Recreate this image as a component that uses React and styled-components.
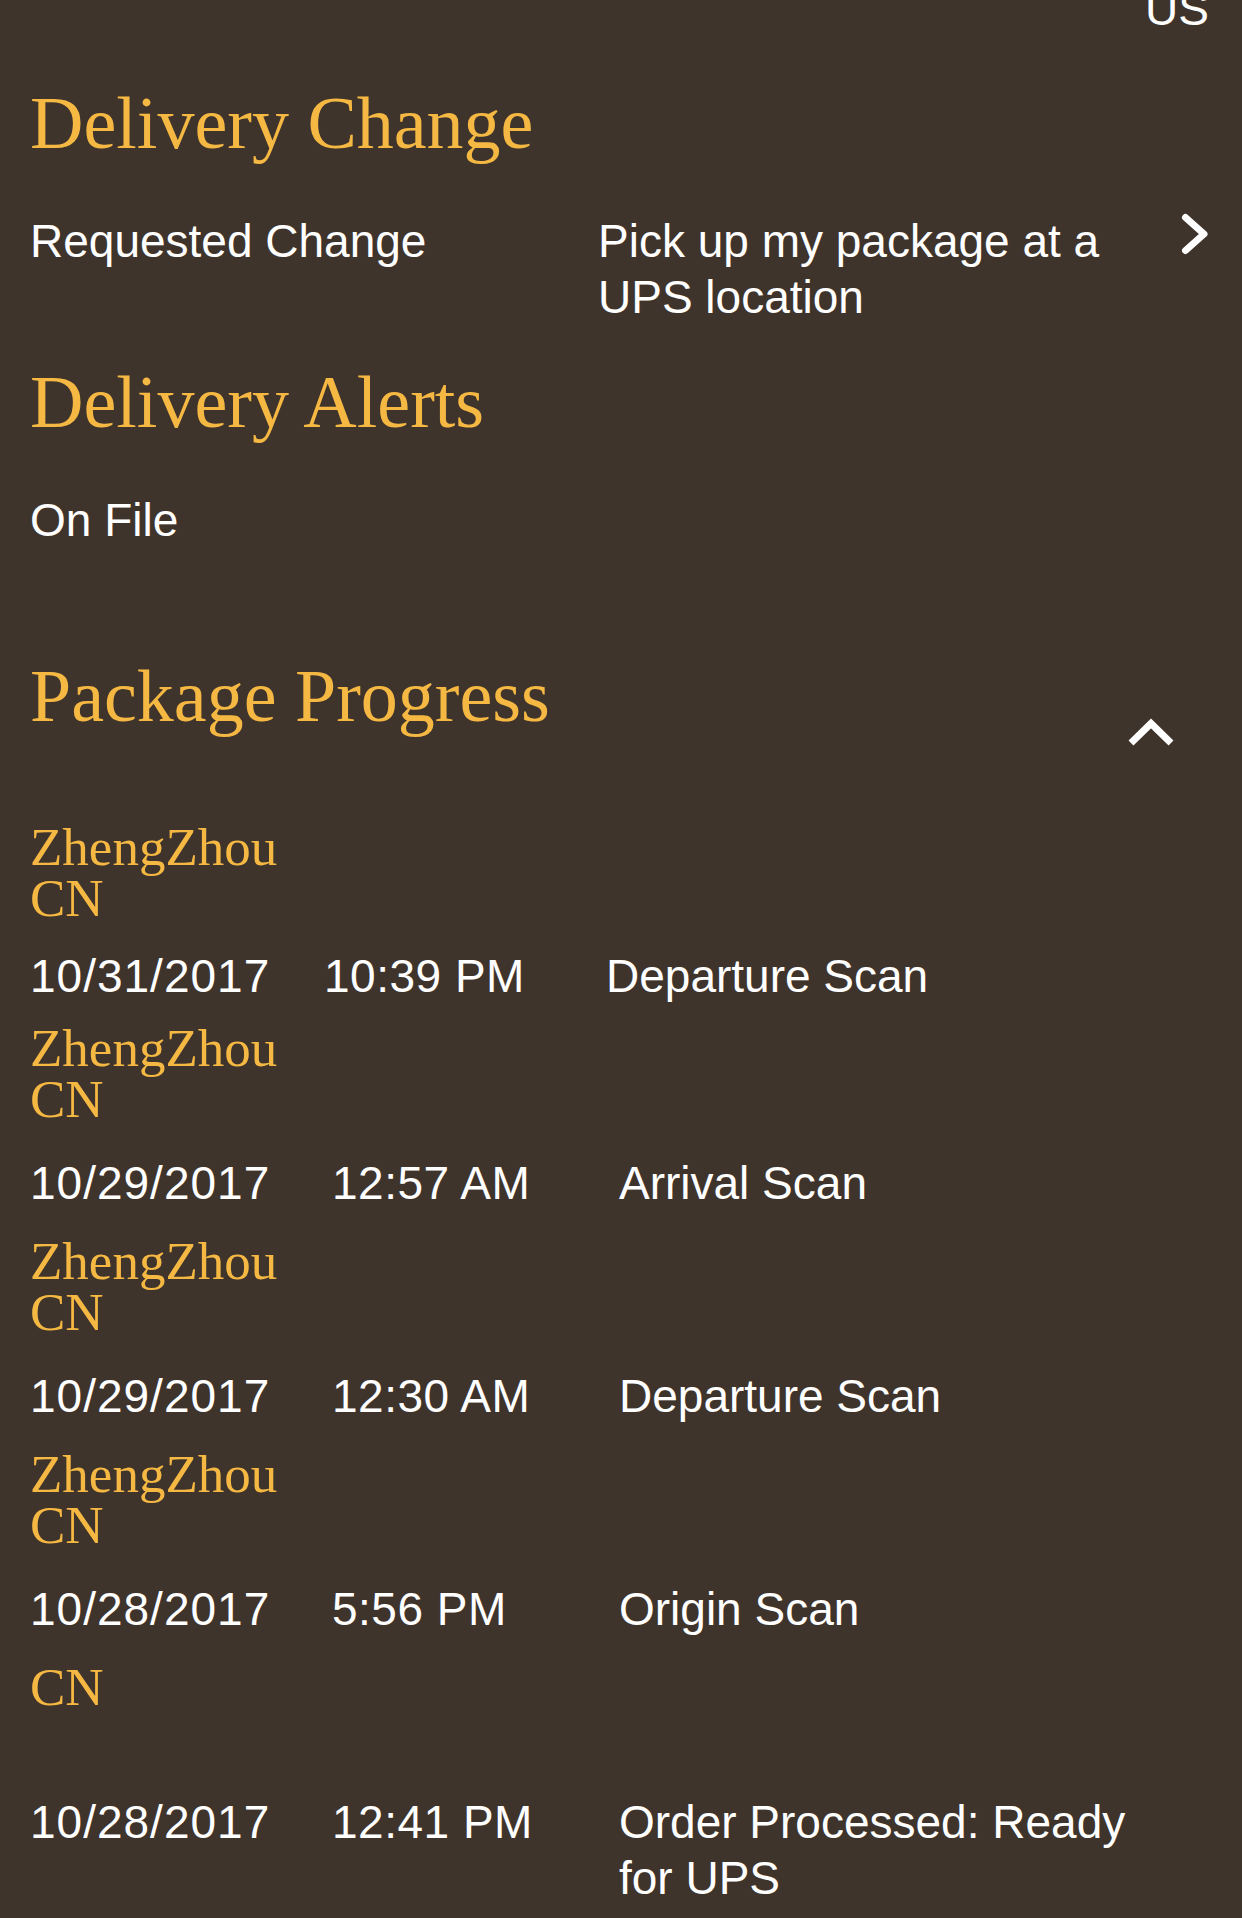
import React from "react";
import styled, { createGlobalStyle } from "styled-components";

const GlobalStyle = createGlobalStyle`
  html, body {
    margin: 0;
    padding: 0;
    background: #3f342c;
  }
  body {
    font-family: "Liberation Sans", Arial, sans-serif;
    color: #ffffff;
  }
`;

const Page = styled.main`
  box-sizing: border-box;
  width: 1242px;
  min-height: 1918px;
  padding: 0 33px 0 30px;
  background: #3f342c;
  overflow: hidden;
`;

const TopLine = styled.div`
  margin-top: -19px;
  text-align: right;
  font-size: 46px;
  line-height: 56px;
`;

const SectionTitle = styled.h2`
  margin: ${(p) => p.$mt}px 0 0;
  font-family: "Liberation Serif", "Times New Roman", serif;
  font-weight: 400;
  font-size: 74px;
  line-height: 80px;
  color: #f5b843;
  white-space: nowrap;
`;

const DetailRow = styled.div`
  display: grid;
  grid-template-columns: 568px 1fr 28px;
  margin-top: 50px;
  font-size: 46px;
  line-height: 56px;
`;

const DetailLabel = styled.div``;
const DetailValue = styled.div``;

const ChevronButton = styled.button`
  align-self: start;
  width: 28px;
  height: 42px;
  padding: 0;
  border: 0;
  background: none;
  display: block;
  svg {
    display: block;
  }
`;

const PlainText = styled.p`
  margin: ${(p) => p.$mt}px 0 0;
  font-size: 46px;
  line-height: 56px;
`;

const ProgressHeader = styled.div`
  display: flex;
  justify-content: space-between;
  align-items: flex-start;
  margin-top: 108px;
`;

const ToggleButton = styled.button`
  margin: 62px 35px 0 0;
  width: 46px;
  height: 28px;
  padding: 0;
  border: 0;
  background: none;
  svg {
    display: block;
  }
`;

const EventList = styled.section`
  margin-top: 76px;
  display: flex;
  flex-direction: column;
`;

const Event = styled.article`
  margin-top: ${(p) => p.$space}px;
`;

const Location = styled.div`
  min-height: 102px;
  font-family: "Liberation Serif", "Times New Roman", serif;
  font-size: 53px;
  line-height: 51px;
  color: #f5b843;
`;

const ScanRow = styled.div`
  display: grid;
  grid-template-columns: ${(p) => p.$cols};
  margin-top: ${(p) => (p.$compact ? 24 : 30)}px;
  padding-right: 50px;
  font-size: 46px;
  line-height: 56px;
`;

const DateCell = styled.div`
  letter-spacing: 1px;
`;

const TimeCell = styled.div`
  letter-spacing: 0.5px;
`;

const DescCell = styled.div``;

const ChevronRight = () => (
  <svg width="28" height="42" viewBox="0 0 28 42" fill="none">
    <path
      d="M4.5 4.5 L23 21 L4.5 37.5"
      stroke="#ffffff"
      strokeWidth="7"
      strokeLinecap="round"
      strokeLinejoin="round"
    />
  </svg>
);

const ChevronUp = () => (
  <svg width="46" height="28" viewBox="0 0 46 28" fill="none">
    <path
      d="M3 25 L23 5.5 L43 25"
      stroke="#ffffff"
      strokeWidth="7"
      strokeLinecap="butt"
      strokeLinejoin="miter"
    />
  </svg>
);

const events = [
  {
    city: "ZhengZhou",
    country: "CN",
    date: "10/31/2017",
    time: "10:39 PM",
    desc: "Departure Scan",
    cols: "294px 282px 1fr",
    compact: true,
    space: 0,
  },
  {
    city: "ZhengZhou",
    country: "CN",
    date: "10/29/2017",
    time: "12:57 AM",
    desc: "Arrival Scan",
    cols: "302px 287px 1fr",
    space: 19,
  },
  {
    city: "ZhengZhou",
    country: "CN",
    date: "10/29/2017",
    time: "12:30 AM",
    desc: "Departure Scan",
    cols: "302px 287px 1fr",
    space: 25,
  },
  {
    city: "ZhengZhou",
    country: "CN",
    date: "10/28/2017",
    time: "5:56 PM",
    desc: "Origin Scan",
    cols: "302px 287px 1fr",
    space: 25,
  },
  {
    city: "",
    country: "CN",
    date: "10/28/2017",
    time: "12:41 PM",
    desc: "Order Processed: Ready for UPS",
    cols: "302px 287px 1fr",
    space: 25,
  },
];

export default function App() {
  return (
    <>
      <GlobalStyle />
      <Page>
        <TopLine>US</TopLine>

        <SectionTitle $mt={46}>Delivery Change</SectionTitle>
        <DetailRow>
          <DetailLabel>Requested Change</DetailLabel>
          <DetailValue>Pick up my package at a UPS location</DetailValue>
          <ChevronButton aria-label="Change delivery">
            <ChevronRight />
          </ChevronButton>
        </DetailRow>

        <SectionTitle $mt={37}>Delivery Alerts</SectionTitle>
        <PlainText $mt={50}>On File</PlainText>

        <ProgressHeader>
          <SectionTitle $mt={0}>Package Progress</SectionTitle>
          <ToggleButton aria-label="Collapse">
            <ChevronUp />
          </ToggleButton>
        </ProgressHeader>

        <EventList>
          {events.map((e, i) => (
            <Event key={i} $space={e.space}>
              <Location>
                {e.city && <div>{e.city}</div>}
                <div>{e.country}</div>
              </Location>
              <ScanRow $cols={e.cols} $compact={e.compact}>
                <DateCell>{e.date}</DateCell>
                <TimeCell>{e.time}</TimeCell>
                <DescCell>{e.desc}</DescCell>
              </ScanRow>
            </Event>
          ))}
        </EventList>
      </Page>
    </>
  );
}
